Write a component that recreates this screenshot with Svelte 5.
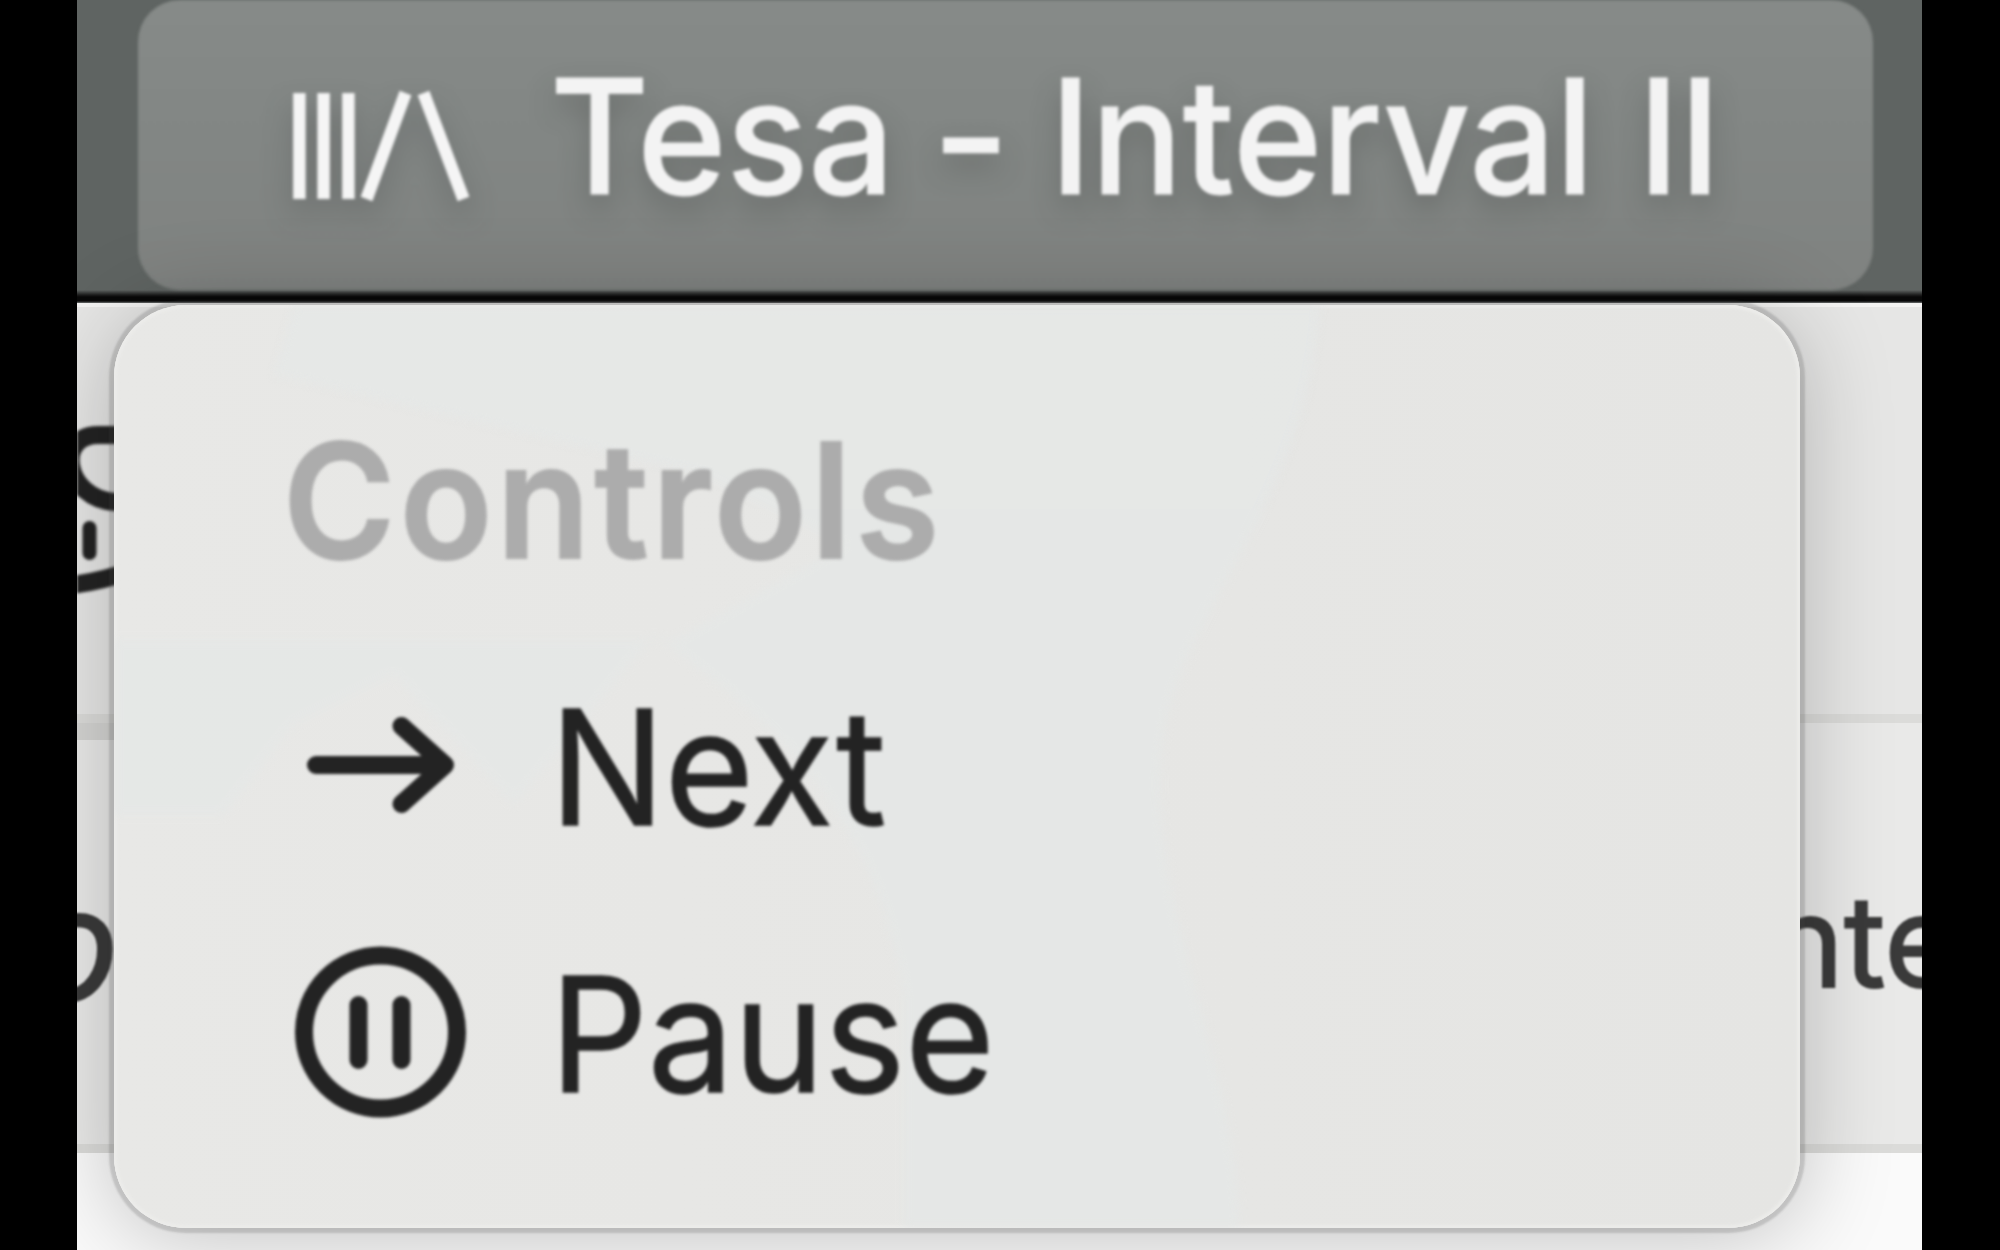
<script>
  const title = ['Tesa', '-', 'Interval', 'II'];
</script>

<div class="stage">
  <div class="screen">
    <header class="menubar">
      <div class="status">
        <svg class="logo" viewBox="0 0 184 116" width="184" height="116">
          <path d="M11.4 3V109M35.6 3V109M60.4 3V109M78.500 109L117.500 3M135.500 3L175.500 109" />
        </svg>
        {#each title as word, i}
          <span class="word w{i}">{word}</span>
        {/each}
      </div>
    </header>

    <div class="window">
      <div class="pane toolbar">
        <svg class="device" viewBox="0 0 60 180" width="60" height="180">
          <path d="M60 20H24C-24 18 -12 84 38 87H60" />
          <path class="dot" d="M12.500 113V138" />
          <path d="M-20 171Q14 170 60 154" />
        </svg>
      </div>
      <div class="pane row">
        <span class="left">o</span>
        <span class="right">nte</span>
      </div>
      <div class="pane rest"></div>

      <nav class="menu">
        <svg class="tint" viewBox="0 0 1686 923" preserveAspectRatio="none">
          <path d="M180 0H1206C1190 220 1050 310 1046 470C1042 610 1125 780 1125 923H790V690C760 500 650 410 540 330L400 500L280 370L180 420L110 510H0V335H560L730 240L590 170L160 70Z" />
        </svg>
        <h2><span>Controls</span></h2>
        <button class="item">
          <svg viewBox="0 0 180 180" width="180" height="180">
            <path d="M25 90H154M110.500 51L154 90L110.500 129" />
          </svg>
          <span class="label">Next</span>
        </button>
        <button class="item">
          <svg viewBox="0 0 180 180" width="180" height="180">
            <circle cx="89.500" cy="90" r="76.500" />
            <path d="M67.500 63V118M110.500 63V118" />
          </svg>
          <span class="label pause">Pause</span>
        </button>
      </nav>
    </div>
  </div>
</div>

<style>
  :global(body) { background: #000; overflow: hidden; }
  .stage { width: 2000px; height: 1250px; background: #000; font-family: Inter, sans-serif; }
  .screen { width: 1845px; height: 1250px; margin-left: 77px; overflow: hidden; display: flex; flex-direction: column; }
  .menubar { height: 303px; flex: none; padding: 0 49px 0 61px; background: linear-gradient(#5f6462 0 290px, #1c1c1c 295px, #080808 297px 301px, #6c706f 303px); box-sizing: border-box; }
  .status {
    height: 290px; border-radius: 42px; box-sizing: border-box; padding: 0 0 0 150px;
    background: linear-gradient(#868a88, #828684 45%, #7f8280);
    display: flex; align-items: flex-start; color: #f3f3f3; white-space: pre;
    filter: blur(1.4px);
  }
  .logo { flex: none; margin-top: 90px; filter: drop-shadow(0 14px 14px rgba(60, 64, 62, .35)); }
  .logo path { fill: none; stroke: #f5f5f5; stroke-width: 12.5; }
  .word { font-size: 159px; line-height: 192px; font-weight: 500; margin-top: 40px; flex: none; text-shadow: 0 14px 28px rgba(60, 62, 60, .35); transform: scaleX(.955); transform-origin: 0 0; -webkit-text-stroke: 1px #f3f3f3; }
  .w0 { width: 382px; margin-left: 78px; }
  .w1 { width: 118px; transform: scaleX(1.06); }
  .w2 { width: 588px; }
  .window { position: relative; flex: 1; display: flex; flex-direction: column; background: #e9e9e8; border-top: 4px solid #f3f3f2; box-sizing: border-box; }
  .pane { box-sizing: border-box; border-bottom: 9px solid #dbdbd9; overflow: hidden; }
  .toolbar { height: 416px; background: #e6e6e5; }
  .row { height: 430px; background: linear-gradient(#d4d4d2, #d4d4d2) 0 0 / 37px 17px no-repeat #e9e9e8; display: flex; justify-content: space-between; }
  .rest { flex: 1; border: 0; background: #fafafa; }
  .device { margin-top: 108px; display: block; filter: blur(1.5px); }
  .device path { fill: none; stroke: #232323; stroke-width: 18; stroke-linecap: round; }
  .device .dot { stroke-width: 14; }
  .row span { line-height: 150px; color: #3a3a3a; filter: blur(1.3px); -webkit-text-stroke: 2px #3a3a3a; }
  .left { margin: 146px 0 0 -51px; font-size: 155px; font-style: italic; }
  .right { width: 153px; margin-top: 143px; font-size: 127px; white-space: pre; }
  .menu {
    position: absolute; z-index: 0; left: 37px; top: -2px; width: 1686px; height: 923px; box-sizing: border-box;
    border-radius: 72px; background: linear-gradient(90deg, #e8e8e6, #e5e5e3); overflow: hidden;
    box-shadow: 0 0 2px 5px rgba(70, 70, 70, .2), 0 8px 90px 4px rgba(0, 0, 0, .22), inset 0 0 3px 3px #ececea;
    padding: 99px 169px; display: flex; flex-direction: column;
  }
  .tint { position: absolute; inset: 0; width: 100%; height: 100%; fill: #e5e8e7; opacity: .7; z-index: -1; filter: blur(4px); }
  .menu h2, .item { margin: 0; filter: blur(1.4px); }
  .menu h2 { font-size: 159px; line-height: 192px; height: 267px; flex: none; font-weight: 600; color: #acacac; letter-spacing: 4.6px; -webkit-text-stroke: 2px #acacac; }
  .menu h2 span, .label { display: inline-block; transform: scaleX(.958); transform-origin: 0 0; }
  .label { -webkit-text-stroke: 1.5px #232323; }
  .label.pause { transform: scaleX(.963); }
  .item { height: 267px; flex: none; border: 0; padding: 0; background: none; font: 400 159px/192px Inter, sans-serif; color: #232323; display: flex; text-align: left; align-items: flex-start; }
  .item svg { flex: none; margin: 4px 79px 0 8px; }
  .item path, .item circle { fill: none; stroke: #232323; stroke-width: 18; stroke-linecap: round; stroke-linejoin: round; }
</style>
